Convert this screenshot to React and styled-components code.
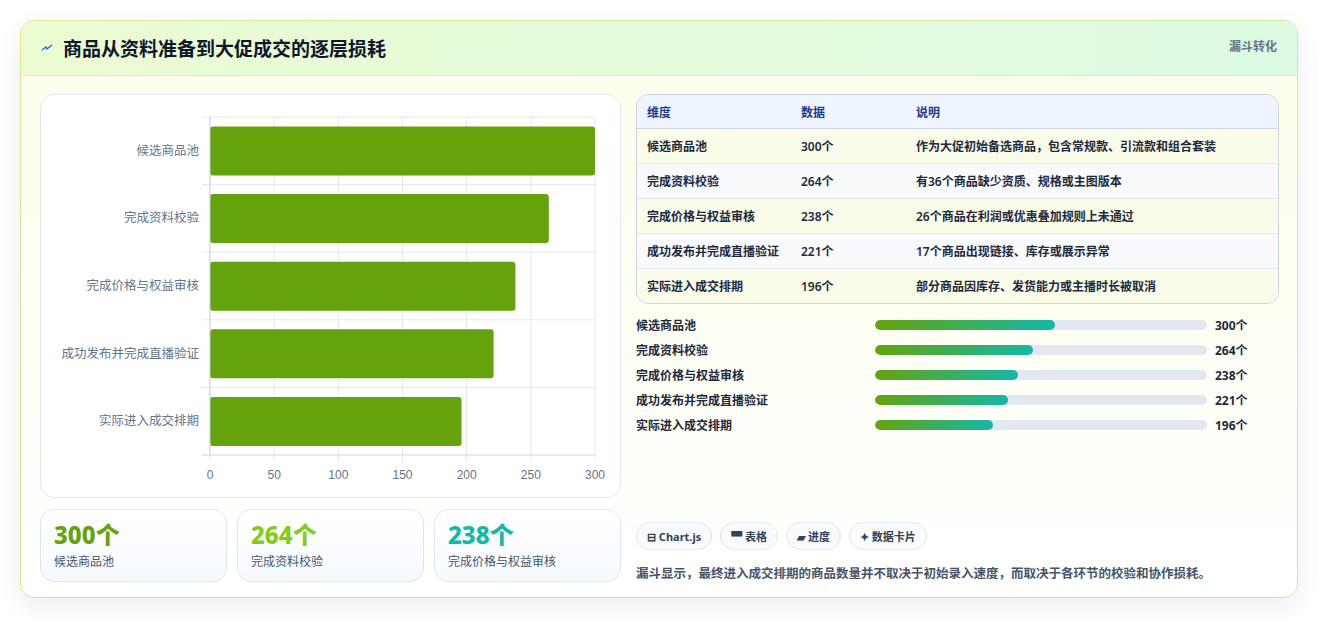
import React from 'react';
import styled, { createGlobalStyle } from 'styled-components';

const Global = createGlobalStyle`
  body {
    margin: 0;
    background: #ffffff;
    font-family: "Noto Sans", "Noto Sans CJK SC", sans-serif;
  }
`;

const stages = [
  { name: '候选商品池', value: 300, note: '作为大促初始备选商品，包含常规款、引流款和组合套装' },
  { name: '完成资料校验', value: 264, note: '有36个商品缺少资质、规格或主图版本' },
  { name: '完成价格与权益审核', value: 238, note: '26个商品在利润或优惠叠加规则上未通过' },
  { name: '成功发布并完成直播验证', value: 221, note: '17个商品出现链接、库存或展示异常' },
  { name: '实际进入成交排期', value: 196, note: '部分商品因库存、发货能力或主播时长被取消' },
];

const Card = styled.div`
  margin: 20px;
  height: 578px;
  box-sizing: border-box;
  border: 1px solid #cfe89a;
  border-radius: 14px;
  background: linear-gradient(180deg, #fbffe9 0%, #ffffff 100%);
  box-shadow: 0 8px 24px rgba(15, 23, 42, 0.08);
  overflow: hidden;
  display: flex;
  flex-direction: column;
`;

const Header = styled.div`
  height: 54px;
  flex: none;
  display: flex;
  align-items: center;
  justify-content: space-between;
  padding: 0 20px;
  background: linear-gradient(90deg, #ecfbd2 0%, #dcfbe4 100%);
  border-bottom: 1px solid #dbeadb;
`;

const Title = styled.h1`
  margin: 0;
  font-size: 19px;
  font-weight: 700;
  color: #0f172a;
  display: flex;
  align-items: center;
  gap: 10px;
`;

const Tag = styled.span`
  font-size: 12px;
  font-weight: 700;
  color: #64748b;
  align-self: flex-start;
  margin-top: 16px;
`;

const Body = styled.div`
  flex: 1;
  display: grid;
  grid-template-columns: 581px 1fr;
  gap: 15px;
  padding: 18px 18px 18px 19px;
`;

const Column = styled.div`
  display: flex;
  flex-direction: column;
  gap: 11px;
  min-width: 0;
`;

const Panel = styled.div`
  background: #ffffff;
  border: 1px solid #e2e8f0;
  border-radius: 14px;
  height: 404px;
  box-sizing: border-box;
`;

const Stats = styled.div`
  display: grid;
  grid-template-columns: repeat(3, 1fr);
  gap: 10px;
`;

const Stat = styled.div`
  height: 73px;
  box-sizing: border-box;
  border: 1px solid #dbe7f3;
  border-radius: 14px;
  background: linear-gradient(180deg, #ffffff, #f6faff);
  padding: 10px 13px;
`;

const StatValue = styled.div`
  font-size: 24px;
  font-weight: 800;
  line-height: 30px;
  color: ${({ $color }) => $color};
`;

const StatLabel = styled.div`
  font-size: 12px;
  color: #475569;
  margin-top: 2px;
`;

const Right = styled.div`
  display: flex;
  flex-direction: column;
  justify-content: space-between;
  min-width: 0;
`;

const Table = styled.table`
  width: 100%;
  border-collapse: separate;
  border-spacing: 0;
  border: 1px solid #cbd5e1;
  border-radius: 12px;
  overflow: hidden;
  font-size: 12px;
  color: #1e293b;
`;

const Th = styled.th`
  text-align: left;
  font-weight: 700;
  color: #1e3a8a;
  background: #eef5ff;
  height: 33px;
  padding: 0 10px;
  border-bottom: 1px solid #cbd5e1;
`;

const Td = styled.td`
  height: 34px;
  padding: 0 10px;
  font-weight: 600;
  background: ${({ $odd }) => ($odd ? '#f8fce9' : '#f8fafc')};
  border-bottom: ${({ $last }) => ($last ? 'none' : '1px solid #e2e8f0')};
`;

const Bars = styled.div`
  display: flex;
  flex-direction: column;
  gap: 9px;
  margin-top: 12px;
`;

const BarRow = styled.div`
  display: grid;
  grid-template-columns: 239px 332px 1fr;
  align-items: center;
  height: 16px;
  font-size: 12px;
  font-weight: 600;
  color: #1e293b;
`;

const Track = styled.div`
  height: 10px;
  border-radius: 5px;
  background: #e2e8f0;
  overflow: hidden;
`;

const Fill = styled.div`
  height: 100%;
  border-radius: 5px;
  background: linear-gradient(90deg, #65a30d, #14b8a6);
`;

const BarValue = styled.span`
  padding-left: 8px;
  font-weight: 700;
`;

const Foot = styled.div`
  display: flex;
  flex-direction: column;
  gap: 13px;
`;

const Chips = styled.div`
  display: flex;
  gap: 8px;
`;

const Chip = styled.span`
  height: 28px;
  box-sizing: border-box;
  padding: 0 10px;
  border: 1px solid #e2e8f0;
  border-radius: 14px;
  background: #f8fafc;
  display: flex;
  align-items: center;
  gap: 4px;
  font-size: 11px;
  font-weight: 700;
  color: #334155;
`;

const Note = styled.p`
  margin: 0;
  font-size: 12.5px;
  font-weight: 600;
  color: #475569;
`;

const Bolt = () => (
  <svg width="12" height="10" viewBox="0 0 12 10">
    <path d="M1 7 L5 4 L6 6 L11 2" fill="none" stroke="#2563eb" strokeWidth="1.4" />
  </svg>
);

const Chart = () => {
  const left = 169, right = 554, top = 22, bottom = 360;
  const band = (bottom - top) / stages.length;
  const x = (v) => left + (v / 300) * (right - left);
  return (
    <svg width="579" height="402" style={{ display: 'block' }}>
      {[0, 50, 100, 150, 200, 250, 300].map((t) => (
        <g key={t}>
          <line x1={x(t)} x2={x(t)} y1={top} y2={bottom + 6} stroke="#e5e7eb" />
          <text x={x(t)} y={384} textAnchor="middle" fontSize="12" fill="#64748b" fontFamily="Liberation Sans, sans-serif">{t}</text>
        </g>
      ))}
      {stages.map((s, i) => (
        <g key={s.name}>
          <line x1={left - 8} x2={right} y1={top + band * i} y2={top + band * i} stroke="#e5e7eb" />
          <rect x={left} y={top + band * i + 9.5} width={x(s.value) - left} height={49} rx="3" fill="#65a30d" />
          <text x={left - 11} y={top + band * i + band / 2 + 4} textAnchor="end" fontSize="12.5" fill="#64748b">{s.name}</text>
        </g>
      ))}
      <line x1={left - 8} x2={right} y1={bottom} y2={bottom} stroke="#cbd5e1" />
      <line x1={left} x2={left} y1={top} y2={bottom} stroke="#cbd5e1" />
    </svg>
  );
};

const statColors = ['#65a30d', '#84cc16', '#14b8a6'];

export default function App() {
  return (
    <>
      <Global />
      <Card>
        <Header>
          <Title><Bolt />商品从资料准备到大促成交的逐层损耗</Title>
          <Tag>漏斗转化</Tag>
        </Header>
        <Body>
          <Column>
            <Panel><Chart /></Panel>
            <Stats>
              {stages.slice(0, 3).map((s, i) => (
                <Stat key={s.name}>
                  <StatValue $color={statColors[i]}>{s.value}个</StatValue>
                  <StatLabel>{s.name}</StatLabel>
                </Stat>
              ))}
            </Stats>
          </Column>
          <Right>
            <div>
              <Table>
                <thead>
                  <tr>
                    <Th style={{ width: 134 }}>维度</Th>
                    <Th style={{ width: 95 }}>数据</Th>
                    <Th>说明</Th>
                  </tr>
                </thead>
                <tbody>
                  {stages.map((s, i) => (
                    <tr key={s.name}>
                      <Td $odd={i % 2 === 0} $last={i === stages.length - 1}>{s.name}</Td>
                      <Td $odd={i % 2 === 0} $last={i === stages.length - 1}>{s.value}个</Td>
                      <Td $odd={i % 2 === 0} $last={i === stages.length - 1}>{s.note}</Td>
                    </tr>
                  ))}
                </tbody>
              </Table>
              <Bars>
                {stages.map((s) => (
                  <BarRow key={s.name}>
                    <span>{s.name}</span>
                    <Track><Fill style={{ width: `${(s.value / 553) * 100}%` }} /></Track>
                    <BarValue>{s.value}个</BarValue>
                  </BarRow>
                ))}
              </Bars>
            </div>
            <Foot>
              <Chips>
                <Chip>⊟ Chart.js</Chip>
                <Chip>▀ 表格</Chip>
                <Chip>▰ 进度</Chip>
                <Chip>✦ 数据卡片</Chip>
              </Chips>
              <Note>漏斗显示，最终进入成交排期的商品数量并不取决于初始录入速度，而取决于各环节的校验和协作损耗。</Note>
            </Foot>
          </Right>
        </Body>
      </Card>
    </>
  );
}
